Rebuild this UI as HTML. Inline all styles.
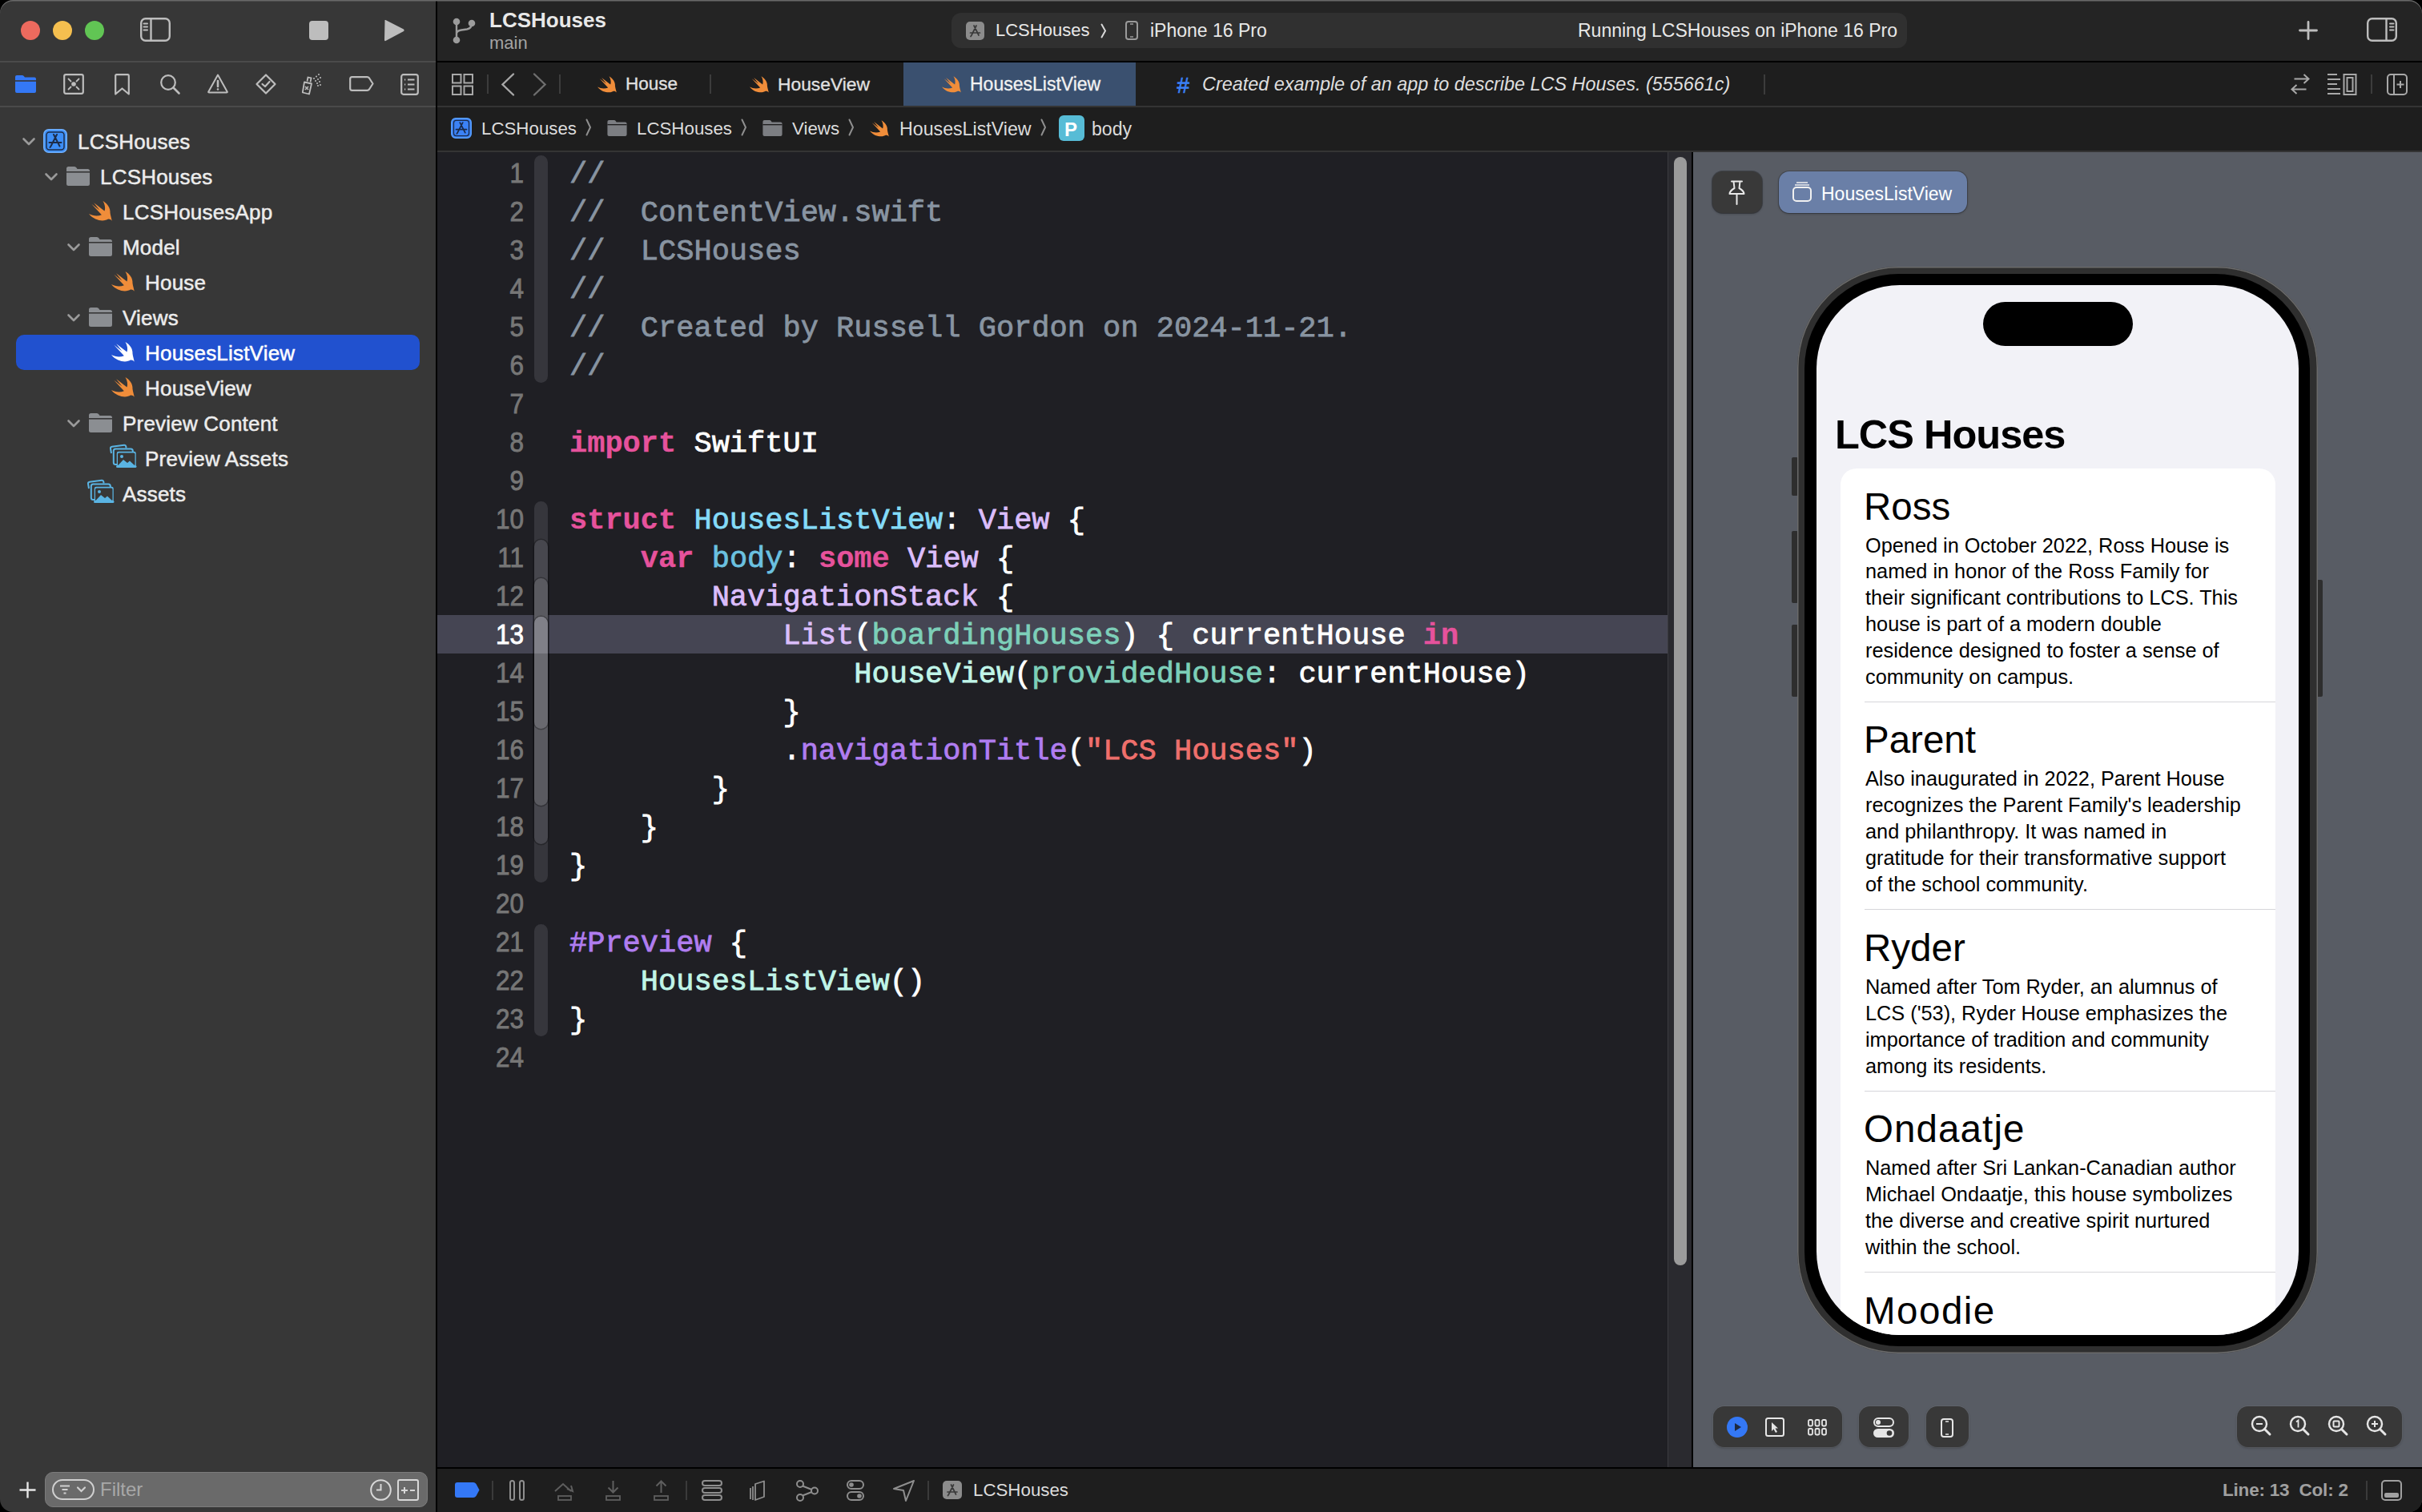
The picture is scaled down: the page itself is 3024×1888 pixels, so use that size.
<!DOCTYPE html><html><head><meta charset="utf-8"><style>
*{margin:0;padding:0;box-sizing:border-box}
html,body{width:3024px;height:1888px;overflow:hidden;background:#000}
body{position:relative;font-family:'Liberation Sans', sans-serif}
.a{position:absolute}
.t{position:absolute;white-space:pre;line-height:0;height:0}
.t span{display:inline-block;line-height:0}
svg{position:absolute;overflow:visible}
</style></head><body>
<div class="a" id="win" style="left:0;top:0;width:3024px;height:1888px;border-radius:16px;overflow:hidden;background:#373737">
<div class="a" style="left:26px;top:26px;width:24px;height:24px;border-radius:12px;background:#ed6a5e"></div>
<div class="a" style="left:66px;top:26px;width:24px;height:24px;border-radius:12px;background:#f5bf4f"></div>
<div class="a" style="left:106px;top:26px;width:24px;height:24px;border-radius:12px;background:#61c554"></div>
<svg style="left:175px;top:22px" width="38" height="30" viewBox="0 0 38 30"><rect x="1.2" y="1.2" width="35.6" height="27.6" rx="5.5" fill="none" stroke="#bdbdbd" stroke-width="2.4"/><path d="M13.5 1.5 V28.5" stroke="#bdbdbd" stroke-width="2.4"/><path d="M4.5 7.5 H9 M4.5 11.5 H9 M4.5 15.5 H9" stroke="#bdbdbd" stroke-width="2" stroke-linecap="round"/></svg>
<div class="a" style="left:386px;top:26px;width:24px;height:24px;border-radius:4px;background:#bdbdbd"></div>
<svg style="left:478px;top:24px" width="28" height="28" viewBox="0 0 28 28"><path d="M2.5 2 Q2 0.5 3.5 1 L26 12.5 Q27.5 14 26 15 L3.5 27 Q2 27.5 2 26 Z" fill="#bdbdbd"/></svg>
<div class="a" style="left:0;top:76px;width:544px;height:2px;background:#4a4a4a"></div>
<div class="a" style="left:0;top:132px;width:544px;height:2px;background:#4a4a4a"></div>
<svg style="left:19px;top:94px" width="26" height="22" viewBox="0 0 26 22"><path d="M2 0 H8.5 Q10 0 11 1.2 L12 2.5 H24 Q26 2.5 26 4.5 V20 Q26 22 24 22 H2 Q0 22 0 20 V2 Q0 0 2 0Z" fill="#3478f6"/><rect x="0" y="6.2" width="26" height="1.6" fill="#373737"/></svg>
<svg style="left:79px;top:92px" width="26" height="26" viewBox="0 0 26 26"><rect x="1.2" y="1.2" width="23.6" height="23.6" rx="2" fill="none" stroke="#bdbdbd" stroke-width="2.2"/><circle cx="13" cy="13" r="2.8" fill="#bdbdbd"/><path d="M6.5 6.5 L9.5 9.5 M19.5 6.5 L16.5 9.5 M6.5 19.5 L9.5 16.5 M19.5 19.5 L16.5 16.5" stroke="#bdbdbd" stroke-width="1.8" stroke-linecap="round"/></svg>
<svg style="left:143px;top:92px" width="19" height="27" viewBox="0 0 19 27"><path d="M1.2 2.5 Q1.2 1.2 2.5 1.2 H16.5 Q17.8 1.2 17.8 2.5 V25.5 L9.5 18.5 L1.2 25.5Z" fill="none" stroke="#bdbdbd" stroke-width="2.2" stroke-linejoin="round"/></svg>
<svg style="left:199px;top:92px" width="27" height="27" viewBox="0 0 27 27"><circle cx="11" cy="11" r="8.8" fill="none" stroke="#bdbdbd" stroke-width="2.2"/><path d="M17.5 17.5 L24.5 24.5" stroke="#bdbdbd" stroke-width="2.6" stroke-linecap="round"/></svg>
<svg style="left:259px;top:92px" width="26" height="25" viewBox="0 0 26 25"><path d="M13 1.5 L24.8 22.8 Q25 23.5 24 23.5 H2 Q1 23.5 1.2 22.8Z" fill="none" stroke="#bdbdbd" stroke-width="2" stroke-linejoin="round"/><path d="M13 9 V16" stroke="#bdbdbd" stroke-width="2.6" stroke-linecap="round"/><circle cx="13" cy="19.5" r="1.3" fill="#bdbdbd"/></svg>
<svg style="left:319px;top:92px" width="26" height="26" viewBox="0 0 26 26"><path d="M13 1.5 L24.5 13 L13 24.5 L1.5 13Z" fill="none" stroke="#bdbdbd" stroke-width="2.2" stroke-linejoin="round"/><path d="M8.5 13 L12 16 L17.5 10" fill="none" stroke="#bdbdbd" stroke-width="2.2" stroke-linecap="round" stroke-linejoin="round"/></svg>
<svg style="left:377px;top:92px" width="30" height="27" viewBox="0 0 30 27"><path d="M3 10.5 L12 12.5 L9 25.5 L0.8 23.5Z" fill="none" stroke="#bdbdbd" stroke-width="1.8" stroke-linejoin="round" transform="rotate(0)"/><path d="M6.5 9.5 L7.5 4.5 L11.5 5.5 L10.5 10.5" fill="none" stroke="#bdbdbd" stroke-width="1.8"/><path d="M4 16 L8 20 M8 16 L4 20" stroke="#bdbdbd" stroke-width="1.6"/><g fill="#bdbdbd"><circle cx="15" cy="6" r="1"/><circle cx="18" cy="3.5" r="1"/><circle cx="21" cy="1" r="1"/><circle cx="17" cy="9" r="1"/><circle cx="20" cy="7" r="1"/><circle cx="23" cy="5" r="1"/><circle cx="19" cy="12" r="1"/><circle cx="22" cy="10" r="1"/><circle cx="20" cy="15" r="1"/><circle cx="23" cy="14" r="1"/></g></svg>
<svg style="left:436px;top:95px" width="31" height="19" viewBox="0 0 31 19"><path d="M3.5 1.2 H22.5 Q24 1.2 25 2.5 L29.5 9.5 L25 16.5 Q24 17.8 22.5 17.8 H3.5 Q1.2 17.8 1.2 15.5 V3.5 Q1.2 1.2 3.5 1.2Z" fill="none" stroke="#bdbdbd" stroke-width="2.2" stroke-linejoin="round"/></svg>
<svg style="left:500px;top:92px" width="23" height="27" viewBox="0 0 23 27"><rect x="1.2" y="1.2" width="20.6" height="24.6" rx="2.5" fill="none" stroke="#bdbdbd" stroke-width="2.2"/><path d="M5 7.5 H6.2 M9 7.5 H17.5 M5 13.5 H6.2 M9 13.5 H17.5 M5 19.5 H6.2 M9 19.5 H17.5" stroke="#bdbdbd" stroke-width="2"/></svg>
<div class="a" style="left:20px;top:418px;width:504px;height:44px;border-radius:10px;background:#2151cf"></div>
<svg style="left:28px;top:172px" width="16" height="10" viewBox="0 0 16 10"><path d="M1.5 1.5 L8 8 L14.5 1.5" fill="none" stroke="#9a9a9a" stroke-width="2.6" stroke-linecap="round" stroke-linejoin="round"/></svg>
<svg style="left:54px;top:161px" width="30" height="30" viewBox="0 0 30 30"><rect x="0.8" y="0.8" width="28.4" height="28.4" rx="6" fill="#3d8ef6" stroke="#6fb0ff" stroke-width="1.6"/><rect x="4" y="4" width="22" height="22" rx="3.5" fill="none" stroke="#1d2c48" stroke-width="1.5"/><path d="M13 7 L20.5 21.5 M17 7 L9.5 21.5 M7.5 17 H22.5 M9.5 21.5 l-1 1.5" stroke="#1d2c48" stroke-width="2" fill="none" stroke-linecap="round"/></svg>
<div class="t" style="left:97px;top:176.9px;font-size:26px;color:#ececec;font-weight:normal;font-style:normal;font-family:'Liberation Sans', sans-serif;-webkit-text-stroke:0.5px #ececec;letter-spacing:0.2px"><span>LCSHouses</span></div>
<svg style="left:56px;top:216px" width="16" height="10" viewBox="0 0 16 10"><path d="M1.5 1.5 L8 8 L14.5 1.5" fill="none" stroke="#9a9a9a" stroke-width="2.6" stroke-linecap="round" stroke-linejoin="round"/></svg>
<svg style="left:83px;top:208px" width="29" height="24" viewBox="0 0 29 24"><path d="M2.5 0 H10 Q11.5 0 12.5 1.5 L13.5 3 H26.5 Q29 3 29 5.5 V21.5 Q29 24 26.5 24 H2.5 Q0 24 0 21.5 V2.5 Q0 0 2.5 0Z" fill="#8b8e92"/><rect x="0" y="6" width="29" height="1.6" fill="#373737"/></svg>
<div class="t" style="left:125px;top:220.9px;font-size:26px;color:#ececec;font-weight:normal;font-style:normal;font-family:'Liberation Sans', sans-serif;-webkit-text-stroke:0.5px #ececec;letter-spacing:0.2px"><span>LCSHouses</span></div>
<svg style="left:111px;top:251px" width="29" height="25" viewBox="0 0 29 25"><path d="M17.5 0 C22.5 3 27 8 26.5 14.5 C26.8 17.5 28.2 21.5 28.7 24.7 C27.5 23 25.5 22.3 24 22.6 C20 25.5 8 26 0 16.1 C5 18.6 11 19.2 15.9 17.2 L3.3 3.8 L13.4 11.4 L6.2 2.2 L19.5 12.5 C20.8 9 20 4 17.5 0 Z" fill="#f08d3a"/></svg>
<div class="t" style="left:153px;top:264.9px;font-size:26px;color:#ececec;font-weight:normal;font-style:normal;font-family:'Liberation Sans', sans-serif;-webkit-text-stroke:0.5px #ececec;letter-spacing:0.2px"><span>LCSHousesApp</span></div>
<svg style="left:84px;top:304px" width="16" height="10" viewBox="0 0 16 10"><path d="M1.5 1.5 L8 8 L14.5 1.5" fill="none" stroke="#9a9a9a" stroke-width="2.6" stroke-linecap="round" stroke-linejoin="round"/></svg>
<svg style="left:111px;top:296px" width="29" height="24" viewBox="0 0 29 24"><path d="M2.5 0 H10 Q11.5 0 12.5 1.5 L13.5 3 H26.5 Q29 3 29 5.5 V21.5 Q29 24 26.5 24 H2.5 Q0 24 0 21.5 V2.5 Q0 0 2.5 0Z" fill="#8b8e92"/><rect x="0" y="6" width="29" height="1.6" fill="#373737"/></svg>
<div class="t" style="left:153px;top:308.9px;font-size:26px;color:#ececec;font-weight:normal;font-style:normal;font-family:'Liberation Sans', sans-serif;-webkit-text-stroke:0.5px #ececec;letter-spacing:0.2px"><span>Model</span></div>
<svg style="left:139px;top:339px" width="29" height="25" viewBox="0 0 29 25"><path d="M17.5 0 C22.5 3 27 8 26.5 14.5 C26.8 17.5 28.2 21.5 28.7 24.7 C27.5 23 25.5 22.3 24 22.6 C20 25.5 8 26 0 16.1 C5 18.6 11 19.2 15.9 17.2 L3.3 3.8 L13.4 11.4 L6.2 2.2 L19.5 12.5 C20.8 9 20 4 17.5 0 Z" fill="#f08d3a"/></svg>
<div class="t" style="left:181px;top:352.9px;font-size:26px;color:#ececec;font-weight:normal;font-style:normal;font-family:'Liberation Sans', sans-serif;-webkit-text-stroke:0.5px #ececec;letter-spacing:0.2px"><span>House</span></div>
<svg style="left:84px;top:392px" width="16" height="10" viewBox="0 0 16 10"><path d="M1.5 1.5 L8 8 L14.5 1.5" fill="none" stroke="#9a9a9a" stroke-width="2.6" stroke-linecap="round" stroke-linejoin="round"/></svg>
<svg style="left:111px;top:384px" width="29" height="24" viewBox="0 0 29 24"><path d="M2.5 0 H10 Q11.5 0 12.5 1.5 L13.5 3 H26.5 Q29 3 29 5.5 V21.5 Q29 24 26.5 24 H2.5 Q0 24 0 21.5 V2.5 Q0 0 2.5 0Z" fill="#8b8e92"/><rect x="0" y="6" width="29" height="1.6" fill="#373737"/></svg>
<div class="t" style="left:153px;top:396.9px;font-size:26px;color:#ececec;font-weight:normal;font-style:normal;font-family:'Liberation Sans', sans-serif;-webkit-text-stroke:0.5px #ececec;letter-spacing:0.2px"><span>Views</span></div>
<svg style="left:139px;top:427px" width="29" height="25" viewBox="0 0 29 25"><path d="M17.5 0 C22.5 3 27 8 26.5 14.5 C26.8 17.5 28.2 21.5 28.7 24.7 C27.5 23 25.5 22.3 24 22.6 C20 25.5 8 26 0 16.1 C5 18.6 11 19.2 15.9 17.2 L3.3 3.8 L13.4 11.4 L6.2 2.2 L19.5 12.5 C20.8 9 20 4 17.5 0 Z" fill="#ffffff"/></svg>
<div class="t" style="left:181px;top:440.9px;font-size:26px;color:#ffffff;font-weight:normal;font-style:normal;font-family:'Liberation Sans', sans-serif;-webkit-text-stroke:0.5px #ffffff;letter-spacing:0.2px"><span>HousesListView</span></div>
<svg style="left:139px;top:471px" width="29" height="25" viewBox="0 0 29 25"><path d="M17.5 0 C22.5 3 27 8 26.5 14.5 C26.8 17.5 28.2 21.5 28.7 24.7 C27.5 23 25.5 22.3 24 22.6 C20 25.5 8 26 0 16.1 C5 18.6 11 19.2 15.9 17.2 L3.3 3.8 L13.4 11.4 L6.2 2.2 L19.5 12.5 C20.8 9 20 4 17.5 0 Z" fill="#f08d3a"/></svg>
<div class="t" style="left:181px;top:484.9px;font-size:26px;color:#ececec;font-weight:normal;font-style:normal;font-family:'Liberation Sans', sans-serif;-webkit-text-stroke:0.5px #ececec;letter-spacing:0.2px"><span>HouseView</span></div>
<svg style="left:84px;top:524px" width="16" height="10" viewBox="0 0 16 10"><path d="M1.5 1.5 L8 8 L14.5 1.5" fill="none" stroke="#9a9a9a" stroke-width="2.6" stroke-linecap="round" stroke-linejoin="round"/></svg>
<svg style="left:111px;top:516px" width="29" height="24" viewBox="0 0 29 24"><path d="M2.5 0 H10 Q11.5 0 12.5 1.5 L13.5 3 H26.5 Q29 3 29 5.5 V21.5 Q29 24 26.5 24 H2.5 Q0 24 0 21.5 V2.5 Q0 0 2.5 0Z" fill="#8b8e92"/><rect x="0" y="6" width="29" height="1.6" fill="#373737"/></svg>
<div class="t" style="left:153px;top:528.9px;font-size:26px;color:#ececec;font-weight:normal;font-style:normal;font-family:'Liberation Sans', sans-serif;-webkit-text-stroke:0.5px #ececec;letter-spacing:0.2px"><span>Preview Content</span></div>
<svg style="left:137px;top:557px" width="34" height="28" viewBox="0 0 34 28"><path d="M2 9 L1 3 Q0.8 1 2.8 0.7 L18 -1.3 Q20 -1.5 20.3 0.5 L20.6 2.5" fill="none" stroke="#5ab4e3" stroke-width="2"/><rect x="8" y="6" width="25.5" height="21" rx="3" fill="#5ab4e3" stroke="#373737" stroke-width="1.5"/><rect x="4.8" y="3.5" width="24" height="19.5" rx="2.5" fill="none" stroke="#5ab4e3" stroke-width="2"/><rect x="10" y="8.5" width="21.5" height="16" rx="1.5" fill="#373737"/><path d="M10 24.5 L17 17 L22 21 L25 18.5 L31.5 24.5Z" fill="#5ab4e3"/><circle cx="15" cy="13" r="2" fill="#5ab4e3"/><rect x="8" y="24" width="25.5" height="3" rx="1.5" fill="#5ab4e3"/></svg>
<div class="t" style="left:181px;top:572.9px;font-size:26px;color:#ececec;font-weight:normal;font-style:normal;font-family:'Liberation Sans', sans-serif;-webkit-text-stroke:0.5px #ececec;letter-spacing:0.2px"><span>Preview Assets</span></div>
<svg style="left:109px;top:601px" width="34" height="28" viewBox="0 0 34 28"><path d="M2 9 L1 3 Q0.8 1 2.8 0.7 L18 -1.3 Q20 -1.5 20.3 0.5 L20.6 2.5" fill="none" stroke="#5ab4e3" stroke-width="2"/><rect x="8" y="6" width="25.5" height="21" rx="3" fill="#5ab4e3" stroke="#373737" stroke-width="1.5"/><rect x="4.8" y="3.5" width="24" height="19.5" rx="2.5" fill="none" stroke="#5ab4e3" stroke-width="2"/><rect x="10" y="8.5" width="21.5" height="16" rx="1.5" fill="#373737"/><path d="M10 24.5 L17 17 L22 21 L25 18.5 L31.5 24.5Z" fill="#5ab4e3"/><circle cx="15" cy="13" r="2" fill="#5ab4e3"/><rect x="8" y="24" width="25.5" height="3" rx="1.5" fill="#5ab4e3"/></svg>
<div class="t" style="left:153px;top:616.9px;font-size:26px;color:#ececec;font-weight:normal;font-style:normal;font-family:'Liberation Sans', sans-serif;-webkit-text-stroke:0.5px #ececec;letter-spacing:0.2px"><span>Assets</span></div>
<div class="a" style="left:56px;top:1838px;width:478px;height:44px;border-radius:10px;background:#6a6a6a;border:1px solid #7b7b7b"></div>
<svg style="left:23px;top:1849px" width="23" height="23" viewBox="0 0 23 23"><path d="M11.5 1.5 V21.5 M1.5 11.5 H21.5" stroke="#e6e6e6" stroke-width="2.4"/></svg>
<svg style="left:65px;top:1847px" width="53" height="26" viewBox="0 0 53 26"><rect x="1" y="1" width="51" height="24" rx="12" fill="none" stroke="#d0d0d0" stroke-width="2"/><path d="M10 8.5 H22 M12.5 13 H19.5 M14.5 17.5 H17.5" stroke="#d0d0d0" stroke-width="2"/><path d="M32 10.5 L36.5 15 L41 10.5" fill="none" stroke="#d0d0d0" stroke-width="2.2" stroke-linecap="round"/></svg>
<div class="t" style="left:125px;top:1859.6px;font-size:24px;color:#a8a8a8;font-weight:normal;font-style:normal;font-family:'Liberation Sans', sans-serif;"><span>Filter</span></div>
<svg style="left:462px;top:1847px" width="27" height="27" viewBox="0 0 27 27"><circle cx="13.5" cy="13.5" r="12.3" fill="none" stroke="#d8d8d8" stroke-width="2"/><path d="M13.5 6 V13.5 H8" fill="none" stroke="#d8d8d8" stroke-width="2"/></svg>
<svg style="left:496px;top:1847px" width="27" height="27" viewBox="0 0 27 27"><rect x="1" y="1" width="25" height="25" rx="2" fill="none" stroke="#d8d8d8" stroke-width="2"/><path d="M5 14 H13 M9 10 V18 M16 14 H22" stroke="#d8d8d8" stroke-width="2"/></svg>
<div class="a" style="left:544px;top:0;width:2px;height:1888px;background:#000"></div>
<div class="a" style="left:546px;top:0;width:2478px;height:76px;background:#242424"></div>
<div class="a" style="left:546px;top:76px;width:2478px;height:2px;background:#000"></div>
<div class="a" style="left:546px;top:78px;width:2478px;height:54px;background:#1e1e1e"></div>
<div class="a" style="left:546px;top:132px;width:2478px;height:2px;background:#343434"></div>
<div class="a" style="left:546px;top:134px;width:2478px;height:54px;background:#1e1e1e"></div>
<div class="a" style="left:546px;top:188px;width:2478px;height:2px;background:#343434"></div>
<svg style="left:564px;top:22px" width="30" height="33" viewBox="0 0 30 33"><circle cx="6" cy="5" r="4.3" fill="#9c9c9c"/><circle cx="6" cy="28" r="4.3" fill="#9c9c9c"/><circle cx="25" cy="7" r="4.3" fill="#9c9c9c"/><path d="M6 5 V28 M25 7 Q25 13.5 19 14.5 L12 15.5 Q6 16.5 6 20" fill="none" stroke="#9c9c9c" stroke-width="2.4"/></svg>
<div class="t" style="left:611px;top:24.9px;font-size:26px;color:#e8e8e8;font-weight:bold;font-style:normal;font-family:'Liberation Sans', sans-serif;"><span>LCSHouses</span></div>
<div class="t" style="left:611px;top:54.3px;font-size:22px;color:#a3a3a3;font-weight:normal;font-style:normal;font-family:'Liberation Sans', sans-serif;"><span>main</span></div>
<div class="a" style="left:1188px;top:16px;width:1193px;height:44px;border-radius:12px;background:#303030"></div>
<svg style="left:1206px;top:27px" width="23" height="23" viewBox="0 0 23 23"><rect x="0" y="0" width="23" height="23" rx="5" fill="#8c8c8c"/><path d="M10 5 L16 17 M13 5 L7 17 M5.5 14 H17.5 M7 17 l-1 1.5" stroke="#3a3a3a" stroke-width="1.7" fill="none" stroke-linecap="round"/></svg>
<div class="t" style="left:1243px;top:38.3px;font-size:22px;color:#e8e8e8;font-weight:normal;font-style:normal;font-family:'Liberation Sans', sans-serif;"><span>LCSHouses</span></div>
<svg style="left:1374px;top:29px" width="8" height="19" viewBox="0 0 8 19"><path d="M1.5 1.5 L6 9.5 L1.5 17.5" fill="none" stroke="#d8d8d8" stroke-width="2" stroke-linecap="round"/></svg>
<svg style="left:1405px;top:26px" width="16" height="24" viewBox="0 0 16 24"><rect x="1" y="1" width="14" height="22" rx="3" fill="none" stroke="#9a9a9a" stroke-width="2"/><path d="M6 4 H10 M6 20 H10" stroke="#9a9a9a" stroke-width="1.3"/></svg>
<div class="t" style="left:1436px;top:37.95px;font-size:23px;color:#e8e8e8;font-weight:normal;font-style:normal;font-family:'Liberation Sans', sans-serif;"><span>iPhone 16 Pro</span></div>
<div class="t" style="left:1970px;top:37.95px;font-size:23px;color:#e8e8e8;font-weight:normal;font-style:normal;font-family:'Liberation Sans', sans-serif;"><span>Running LCSHouses on iPhone 16 Pro</span></div>
<svg style="left:2870px;top:26px" width="24" height="24" viewBox="0 0 24 24"><path d="M12 1.5 V22.5 M1.5 12 H22.5" stroke="#bdbdbd" stroke-width="2.8" stroke-linecap="round"/></svg>
<svg style="left:2955px;top:22px" width="38" height="30" viewBox="0 0 38 30"><rect x="1.2" y="1.2" width="35.6" height="27.6" rx="5.5" fill="none" stroke="#bdbdbd" stroke-width="2.4"/><path d="M24.5 1.5 V28.5" stroke="#bdbdbd" stroke-width="2.4"/><path d="M29 7.5 H33.5 M29 11.5 H33.5 M29 15.5 H33.5" stroke="#bdbdbd" stroke-width="2" stroke-linecap="round"/></svg>
<svg style="left:564px;top:92px" width="27" height="27" viewBox="0 0 27 27"><g fill="none" stroke="#a8a8a8" stroke-width="2"><rect x="1" y="1" width="10.5" height="10.5"/><rect x="15.5" y="1" width="10.5" height="10.5"/><rect x="1" y="15.5" width="10.5" height="10.5"/><rect x="15.5" y="15.5" width="10.5" height="10.5"/></g></svg>
<div class="a" style="left:608px;top:93px;width:2px;height:24px;background:#3c3c3c"></div>
<svg style="left:625px;top:91px" width="18" height="29" viewBox="0 0 18 29"><path d="M16 1.5 L2.5 14.5 L16 27.5" fill="none" stroke="#a8a8a8" stroke-width="2.4" stroke-linecap="round"/></svg>
<svg style="left:665px;top:91px" width="18" height="29" viewBox="0 0 18 29"><path d="M2 1.5 L15.5 14.5 L2 27.5" fill="none" stroke="#6e6e6e" stroke-width="2.4" stroke-linecap="round"/></svg>
<div class="a" style="left:698px;top:93px;width:2px;height:24px;background:#3c3c3c"></div>
<svg style="left:746px;top:95px" width="24" height="21" viewBox="0 0 29 25"><path d="M17.5 0 C22.5 3 27 8 26.5 14.5 C26.8 17.5 28.2 21.5 28.7 24.7 C27.5 23 25.5 22.3 24 22.6 C20 25.5 8 26 0 16.1 C5 18.6 11 19.2 15.9 17.2 L3.3 3.8 L13.4 11.4 L6.2 2.2 L19.5 12.5 C20.8 9 20 4 17.5 0 Z" fill="#f08d3a"/></svg>
<div class="t" style="left:781px;top:105.12px;font-size:22.5px;color:#e0e0e0;font-weight:normal;font-style:normal;font-family:'Liberation Sans', sans-serif;-webkit-text-stroke:0.3px #e0e0e0"><span>House</span></div>
<div class="a" style="left:886px;top:93px;width:2px;height:24px;background:#3c3c3c"></div>
<svg style="left:936px;top:95px" width="24" height="21" viewBox="0 0 29 25"><path d="M17.5 0 C22.5 3 27 8 26.5 14.5 C26.8 17.5 28.2 21.5 28.7 24.7 C27.5 23 25.5 22.3 24 22.6 C20 25.5 8 26 0 16.1 C5 18.6 11 19.2 15.9 17.2 L3.3 3.8 L13.4 11.4 L6.2 2.2 L19.5 12.5 C20.8 9 20 4 17.5 0 Z" fill="#f08d3a"/></svg>
<div class="t" style="left:971px;top:105.02px;font-size:22.8px;color:#e0e0e0;font-weight:normal;font-style:normal;font-family:'Liberation Sans', sans-serif;-webkit-text-stroke:0.3px #e0e0e0"><span>HouseView</span></div>
<div class="a" style="left:1128px;top:78px;width:290px;height:54px;background:#3a506f"></div>
<svg style="left:1176px;top:95px" width="24" height="21" viewBox="0 0 29 25"><path d="M17.5 0 C22.5 3 27 8 26.5 14.5 C26.8 17.5 28.2 21.5 28.7 24.7 C27.5 23 25.5 22.3 24 22.6 C20 25.5 8 26 0 16.1 C5 18.6 11 19.2 15.9 17.2 L3.3 3.8 L13.4 11.4 L6.2 2.2 L19.5 12.5 C20.8 9 20 4 17.5 0 Z" fill="#f08d3a"/></svg>
<div class="t" style="left:1211px;top:104.95px;font-size:23px;color:#f2f2f2;font-weight:normal;font-style:normal;font-family:'Liberation Sans', sans-serif;-webkit-text-stroke:0.3px #f2f2f2"><span>HousesListView</span></div>
<div class="t" style="left:1469px;top:106.7px;font-size:28px;color:#3b82f6;font-weight:normal;font-style:italic;font-family:'Liberation Sans', sans-serif;-webkit-text-stroke:0.6px #3b82f6"><span>#</span></div>
<div class="t" style="left:1501px;top:104.81px;font-size:23.4px;color:#dedede;font-weight:normal;font-style:italic;font-family:'Liberation Sans', sans-serif;"><span>Created example of an app to describe LCS Houses. (555661c)</span></div>
<div class="a" style="left:2202px;top:93px;width:2px;height:25px;background:#3c3c3c"></div>
<svg style="left:2859px;top:92px" width="26" height="27" viewBox="0 0 26 27"><path d="M5.5 6.5 H23.5 M17.5 1 L23.5 6.5 L17.5 12 M20.5 19.5 H2.5 M8.5 14 L2.5 19.5 L8.5 25" fill="none" stroke="#a8a8a8" stroke-width="2"/></svg>
<svg style="left:2906px;top:92px" width="37" height="27" viewBox="0 0 37 27"><path d="M0 1 H12 M0 7 H16 M0 13 H12 M0 19 H16 M0 25 H16" stroke="#a8a8a8" stroke-width="2"/><rect x="20.5" y="1" width="15" height="25" fill="none" stroke="#a8a8a8" stroke-width="2"/><rect x="24.5" y="5" width="7" height="17" fill="none" stroke="#a8a8a8" stroke-width="2"/></svg>
<div class="a" style="left:2960px;top:93px;width:2px;height:24px;background:#3c3c3c"></div>
<svg style="left:2980px;top:92px" width="26" height="27" viewBox="0 0 26 27"><rect x="1" y="1" width="24" height="25" rx="4" fill="none" stroke="#a8a8a8" stroke-width="2"/><path d="M9 1 V26 M12.5 13.5 H21.5 M17 9 V18" stroke="#a8a8a8" stroke-width="2"/></svg>
<svg style="left:563px;top:147px" width="26" height="26" viewBox="0 0 30 30"><rect x="0.8" y="0.8" width="28.4" height="28.4" rx="6" fill="#3b82f6" stroke="#5aa0ff" stroke-width="1.6"/><rect x="4" y="4" width="22" height="22" rx="3.5" fill="none" stroke="#1a2a48" stroke-width="1.5"/><path d="M13 7 L20.5 21.5 M17 7 L9.5 21.5 M7.5 17 H22.5 M9.5 21.5 l-1 1.5" stroke="#1a2a48" stroke-width="2" fill="none" stroke-linecap="round"/></svg>
<div class="t" style="left:601px;top:161.19px;font-size:22.3px;color:#dcdcdc;font-weight:normal;font-style:normal;font-family:'Liberation Sans', sans-serif;"><span>LCSHouses</span></div>
<svg style="left:731px;top:148px" width="8" height="22" viewBox="0 0 8 22"><path d="M1.5 1.5 L6 11 L1.5 20.5" fill="none" stroke="#8f8f8f" stroke-width="2" stroke-linecap="round"/></svg>
<svg style="left:758px;top:150px" width="25" height="20" viewBox="0 0 29 24"><path d="M2.5 0 H10 Q11.5 0 12.5 1.5 L13.5 3 H26.5 Q29 3 29 5.5 V21.5 Q29 24 26.5 24 H2.5 Q0 24 0 21.5 V2.5 Q0 0 2.5 0Z" fill="#7c7e82"/><rect x="0" y="6" width="29" height="1.6" fill="#1e1e1e"/></svg>
<div class="t" style="left:795px;top:161.19px;font-size:22.3px;color:#dcdcdc;font-weight:normal;font-style:normal;font-family:'Liberation Sans', sans-serif;"><span>LCSHouses</span></div>
<svg style="left:925px;top:148px" width="8" height="22" viewBox="0 0 8 22"><path d="M1.5 1.5 L6 11 L1.5 20.5" fill="none" stroke="#8f8f8f" stroke-width="2" stroke-linecap="round"/></svg>
<svg style="left:952px;top:150px" width="25" height="20" viewBox="0 0 29 24"><path d="M2.5 0 H10 Q11.5 0 12.5 1.5 L13.5 3 H26.5 Q29 3 29 5.5 V21.5 Q29 24 26.5 24 H2.5 Q0 24 0 21.5 V2.5 Q0 0 2.5 0Z" fill="#7c7e82"/><rect x="0" y="6" width="29" height="1.6" fill="#1e1e1e"/></svg>
<div class="t" style="left:989px;top:161.19px;font-size:22.3px;color:#dcdcdc;font-weight:normal;font-style:normal;font-family:'Liberation Sans', sans-serif;"><span>Views</span></div>
<svg style="left:1059px;top:148px" width="8" height="22" viewBox="0 0 8 22"><path d="M1.5 1.5 L6 11 L1.5 20.5" fill="none" stroke="#8f8f8f" stroke-width="2" stroke-linecap="round"/></svg>
<svg style="left:1086px;top:150px" width="24" height="21" viewBox="0 0 29 25"><path d="M17.5 0 C22.5 3 27 8 26.5 14.5 C26.8 17.5 28.2 21.5 28.7 24.7 C27.5 23 25.5 22.3 24 22.6 C20 25.5 8 26 0 16.1 C5 18.6 11 19.2 15.9 17.2 L3.3 3.8 L13.4 11.4 L6.2 2.2 L19.5 12.5 C20.8 9 20 4 17.5 0 Z" fill="#f08d3a"/></svg>
<div class="t" style="left:1123px;top:160.88px;font-size:23.2px;color:#dcdcdc;font-weight:normal;font-style:normal;font-family:'Liberation Sans', sans-serif;"><span>HousesListView</span></div>
<svg style="left:1299px;top:148px" width="8" height="22" viewBox="0 0 8 22"><path d="M1.5 1.5 L6 11 L1.5 20.5" fill="none" stroke="#8f8f8f" stroke-width="2" stroke-linecap="round"/></svg>
<div class="a" style="left:1322px;top:144px;width:32px;height:32px;border-radius:6px;background:#57bcd6"></div>
<div class="t" style="left:1329px;top:161.6px;font-size:24px;color:#ffffff;font-weight:bold;font-style:normal;font-family:'Liberation Sans', sans-serif;"><span>P</span></div>
<div class="t" style="left:1363px;top:160.91px;font-size:23.1px;color:#dcdcdc;font-weight:normal;font-style:normal;font-family:'Liberation Sans', sans-serif;"><span>body</span></div>
<div class="a" style="left:546px;top:1832px;width:2478px;height:2px;background:#000"></div>
<div class="a" style="left:546px;top:1834px;width:2478px;height:54px;background:#1e1e1e"></div>
<svg style="left:568px;top:1851px" width="31" height="19" viewBox="0 0 31 19"><path d="M3 0 H23 Q25 0 26.5 2 L30.5 9.5 L26.5 17 Q25 19 23 19 H3 Q0 19 0 16 V3 Q0 0 3 0Z" fill="#3478f6"/></svg>
<div class="a" style="left:614px;top:1849px;width:2px;height:24px;background:#3a3a3a"></div>
<svg style="left:636px;top:1848px" width="20" height="26" viewBox="0 0 20 26"><rect x="1" y="1" width="5" height="24" rx="2.5" fill="none" stroke="#8e8e8e" stroke-width="2"/><rect x="13" y="1" width="5" height="24" rx="2.5" fill="none" stroke="#8e8e8e" stroke-width="2"/></svg>
<svg style="left:692px;top:1848px" width="28" height="26" viewBox="0 0 28 26"><path d="M1 14 L11 5 L21 14 M16 11 L23 14 L21 7" fill="none" stroke="#5e5e5e" stroke-width="2"/><rect x="5" y="20" width="16" height="5" fill="none" stroke="#5e5e5e" stroke-width="1.8"/></svg>
<svg style="left:756px;top:1848px" width="19" height="26" viewBox="0 0 19 26"><path d="M9.5 1 V15 M3.5 9.5 L9.5 15.5 L15.5 9.5" fill="none" stroke="#5e5e5e" stroke-width="2"/><rect x="1" y="20" width="17" height="5" fill="none" stroke="#5e5e5e" stroke-width="1.8"/></svg>
<svg style="left:816px;top:1848px" width="19" height="26" viewBox="0 0 19 26"><path d="M9.5 16 V2 M3.5 7.5 L9.5 1.5 L15.5 7.5" fill="none" stroke="#5e5e5e" stroke-width="2"/><rect x="1" y="20" width="17" height="5" fill="none" stroke="#5e5e5e" stroke-width="1.8"/></svg>
<div class="a" style="left:856px;top:1849px;width:2px;height:24px;background:#3a3a3a"></div>
<svg style="left:876px;top:1848px" width="26" height="26" viewBox="0 0 26 26"><rect x="1" y="1" width="24" height="6" rx="3" fill="none" stroke="#8e8e8e" stroke-width="2"/><rect x="1" y="10" width="24" height="6" rx="3" fill="none" stroke="#8e8e8e" stroke-width="2"/><rect x="1" y="19" width="24" height="6" rx="3" fill="none" stroke="#8e8e8e" stroke-width="2"/></svg>
<svg style="left:936px;top:1848px" width="24" height="27" viewBox="0 0 24 27"><path d="M7 5 L18 1.5 V21 L7 25Z M4 8 V25 M1 10 V24" fill="none" stroke="#8e8e8e" stroke-width="1.8" stroke-linejoin="round"/></svg>
<svg style="left:994px;top:1848px" width="28" height="27" viewBox="0 0 28 27"><circle cx="5" cy="5" r="4" fill="none" stroke="#8e8e8e" stroke-width="2"/><circle cx="5" cy="22" r="4" fill="none" stroke="#8e8e8e" stroke-width="2"/><circle cx="23" cy="13.5" r="4" fill="none" stroke="#8e8e8e" stroke-width="2"/><path d="M8 7.5 L19.5 12 M8 19.5 L19.5 15" stroke="#8e8e8e" stroke-width="2"/></svg>
<svg style="left:1057px;top:1848px" width="22" height="26" viewBox="0 0 22 26"><rect x="1" y="1" width="20" height="10" rx="5" fill="none" stroke="#8e8e8e" stroke-width="2"/><circle cx="6" cy="6" r="2.8" fill="#8e8e8e"/><rect x="1" y="15" width="20" height="10" rx="5" fill="none" stroke="#8e8e8e" stroke-width="2"/><circle cx="16" cy="20" r="2.8" fill="#8e8e8e"/></svg>
<svg style="left:1115px;top:1848px" width="27" height="27" viewBox="0 0 27 27"><path d="M26 1 L1 11 L13 13 L16 26Z" fill="none" stroke="#8e8e8e" stroke-width="2" stroke-linejoin="round"/></svg>
<div class="a" style="left:1158px;top:1849px;width:2px;height:24px;background:#3a3a3a"></div>
<svg style="left:1177px;top:1849px" width="24" height="23" viewBox="0 0 24 23"><rect x="0" y="0" width="24" height="23" rx="5" fill="#8c8c8c"/><path d="M10.5 5 L16.5 17 M13.5 5 L7.5 17 M6 14 H18 M7.5 17 l-1 1.5" stroke="#3a3a3a" stroke-width="1.7" fill="none" stroke-linecap="round"/></svg>
<div class="t" style="left:1215px;top:1861.19px;font-size:22.3px;color:#dcdcdc;font-weight:normal;font-style:normal;font-family:'Liberation Sans', sans-serif;"><span>LCSHouses</span></div>
<div class="t" style="left:2775px;top:1861.12px;font-size:22.5px;color:#a0a0a0;font-weight:bold;font-style:normal;font-family:'Liberation Sans', sans-serif;letter-spacing:-0.2px"><span>Line: 13  Col: 2</span></div>
<div class="a" style="left:2954px;top:1849px;width:2px;height:24px;background:#3a3a3a"></div>
<svg style="left:2973px;top:1848px" width="26" height="26" viewBox="0 0 26 26"><rect x="1" y="1" width="24" height="24" rx="4" fill="none" stroke="#a0a0a0" stroke-width="2"/><rect x="4" y="16" width="18" height="6" rx="2" fill="#a0a0a0"/></svg>
<div class="a" style="left:546px;top:190px;width:1536px;height:1642px;background:#1f1f24"></div>
<div class="a" style="left:2082px;top:190px;width:30px;height:1642px;background:#2a2a2f;border-left:1px solid #3a3a3f"></div>
<div class="a" style="left:2090px;top:196px;width:16px;height:1384px;border-radius:8px;background:#9b9b9b"></div>
<div class="a" style="left:2112px;top:190px;width:2px;height:1642px;background:#000"></div>
<div class="a" style="left:546px;top:768px;width:1536px;height:48px;background:#454553"></div>
<div class="a" style="left:667px;top:194px;width:17px;height:284px;border-radius:8.5px;background:#36363c"></div>
<div class="a" style="left:667px;top:626px;width:17px;height:476px;border-radius:8.5px;background:#36363c"></div>
<div class="a" style="left:667px;top:674px;width:17px;height:380px;border-radius:8.5px;background:#47474e;box-shadow:0 0 0 1.5px rgba(0,0,0,0.28)"></div>
<div class="a" style="left:667px;top:722px;width:17px;height:284px;border-radius:8.5px;background:#5a5a60;box-shadow:0 0 0 1.5px rgba(0,0,0,0.28)"></div>
<div class="a" style="left:667px;top:770px;width:17px;height:140px;border-radius:8.5px;background:#69696f;box-shadow:0 0 0 1.5px rgba(0,0,0,0.28)"></div>
<div class="a" style="left:667px;top:770px;width:17px;height:46px;border-radius:8.5px 8.5px 0 0;background:#808088"></div>
<div class="a" style="left:667px;top:1154px;width:17px;height:140px;border-radius:8.5px;background:#36363c"></div>
<div class="t" style="left:560px;width:94px;text-align:right;top:215.75px;font-size:35px;color:#767676;-webkit-text-stroke:0.9px #767676;transform:scaleX(0.9);transform-origin:100% 0"><span>1</span></div>
<div class="t" style="left:711px;top:218.38px;font-family:'Liberation Mono', monospace;font-size:37px"><span style="color:#8894a1;font-weight:normal;-webkit-text-stroke:0.8px #8894a1">//</span></div>
<div class="t" style="left:560px;width:94px;text-align:right;top:263.75px;font-size:35px;color:#767676;-webkit-text-stroke:0.9px #767676;transform:scaleX(0.9);transform-origin:100% 0"><span>2</span></div>
<div class="t" style="left:711px;top:266.38px;font-family:'Liberation Mono', monospace;font-size:37px"><span style="color:#8894a1;font-weight:normal;-webkit-text-stroke:0.8px #8894a1">//  ContentView.swift</span></div>
<div class="t" style="left:560px;width:94px;text-align:right;top:311.75px;font-size:35px;color:#767676;-webkit-text-stroke:0.9px #767676;transform:scaleX(0.9);transform-origin:100% 0"><span>3</span></div>
<div class="t" style="left:711px;top:314.38px;font-family:'Liberation Mono', monospace;font-size:37px"><span style="color:#8894a1;font-weight:normal;-webkit-text-stroke:0.8px #8894a1">//  LCSHouses</span></div>
<div class="t" style="left:560px;width:94px;text-align:right;top:359.75px;font-size:35px;color:#767676;-webkit-text-stroke:0.9px #767676;transform:scaleX(0.9);transform-origin:100% 0"><span>4</span></div>
<div class="t" style="left:711px;top:362.38px;font-family:'Liberation Mono', monospace;font-size:37px"><span style="color:#8894a1;font-weight:normal;-webkit-text-stroke:0.8px #8894a1">//</span></div>
<div class="t" style="left:560px;width:94px;text-align:right;top:407.75px;font-size:35px;color:#767676;-webkit-text-stroke:0.9px #767676;transform:scaleX(0.9);transform-origin:100% 0"><span>5</span></div>
<div class="t" style="left:711px;top:410.38px;font-family:'Liberation Mono', monospace;font-size:37px"><span style="color:#8894a1;font-weight:normal;-webkit-text-stroke:0.8px #8894a1">//  Created by Russell Gordon on 2024-11-21.</span></div>
<div class="t" style="left:560px;width:94px;text-align:right;top:455.75px;font-size:35px;color:#767676;-webkit-text-stroke:0.9px #767676;transform:scaleX(0.9);transform-origin:100% 0"><span>6</span></div>
<div class="t" style="left:711px;top:458.38px;font-family:'Liberation Mono', monospace;font-size:37px"><span style="color:#8894a1;font-weight:normal;-webkit-text-stroke:0.8px #8894a1">//</span></div>
<div class="t" style="left:560px;width:94px;text-align:right;top:503.75px;font-size:35px;color:#767676;-webkit-text-stroke:0.9px #767676;transform:scaleX(0.9);transform-origin:100% 0"><span>7</span></div>
<div class="t" style="left:560px;width:94px;text-align:right;top:551.75px;font-size:35px;color:#767676;-webkit-text-stroke:0.9px #767676;transform:scaleX(0.9);transform-origin:100% 0"><span>8</span></div>
<div class="t" style="left:711px;top:554.38px;font-family:'Liberation Mono', monospace;font-size:37px"><span style="color:#e6529c;font-weight:bold;-webkit-text-stroke:0.3px #e6529c">import</span><span style="color:#ffffff;font-weight:normal;-webkit-text-stroke:0.8px #ffffff"> SwiftUI</span></div>
<div class="t" style="left:560px;width:94px;text-align:right;top:599.75px;font-size:35px;color:#767676;-webkit-text-stroke:0.9px #767676;transform:scaleX(0.9);transform-origin:100% 0"><span>9</span></div>
<div class="t" style="left:560px;width:94px;text-align:right;top:647.75px;font-size:35px;color:#767676;-webkit-text-stroke:0.9px #767676;transform:scaleX(0.9);transform-origin:100% 0"><span>10</span></div>
<div class="t" style="left:711px;top:650.38px;font-family:'Liberation Mono', monospace;font-size:37px"><span style="color:#e6529c;font-weight:bold;-webkit-text-stroke:0.3px #e6529c">struct</span><span style="color:#ffffff;font-weight:normal;-webkit-text-stroke:0.8px #ffffff"> </span><span style="color:#84dbf8;font-weight:normal;-webkit-text-stroke:0.8px #84dbf8">HousesListView</span><span style="color:#ffffff;font-weight:normal;-webkit-text-stroke:0.8px #ffffff">: </span><span style="color:#dbbdfb;font-weight:normal;-webkit-text-stroke:0.8px #dbbdfb">View</span><span style="color:#ffffff;font-weight:normal;-webkit-text-stroke:0.8px #ffffff"> {</span></div>
<div class="t" style="left:560px;width:94px;text-align:right;top:695.75px;font-size:35px;color:#767676;-webkit-text-stroke:0.9px #767676;transform:scaleX(0.9);transform-origin:100% 0"><span>11</span></div>
<div class="t" style="left:711px;top:698.38px;font-family:'Liberation Mono', monospace;font-size:37px"><span style="color:#ffffff;font-weight:normal;-webkit-text-stroke:0.8px #ffffff">    </span><span style="color:#e6529c;font-weight:bold;-webkit-text-stroke:0.3px #e6529c">var</span><span style="color:#ffffff;font-weight:normal;-webkit-text-stroke:0.8px #ffffff"> </span><span style="color:#6bc1e0;font-weight:normal;-webkit-text-stroke:0.8px #6bc1e0">body</span><span style="color:#ffffff;font-weight:normal;-webkit-text-stroke:0.8px #ffffff">: </span><span style="color:#e6529c;font-weight:bold;-webkit-text-stroke:0.3px #e6529c">some</span><span style="color:#ffffff;font-weight:normal;-webkit-text-stroke:0.8px #ffffff"> </span><span style="color:#dbbdfb;font-weight:normal;-webkit-text-stroke:0.8px #dbbdfb">View</span><span style="color:#ffffff;font-weight:normal;-webkit-text-stroke:0.8px #ffffff"> {</span></div>
<div class="t" style="left:560px;width:94px;text-align:right;top:743.75px;font-size:35px;color:#767676;-webkit-text-stroke:0.9px #767676;transform:scaleX(0.9);transform-origin:100% 0"><span>12</span></div>
<div class="t" style="left:711px;top:746.38px;font-family:'Liberation Mono', monospace;font-size:37px"><span style="color:#ffffff;font-weight:normal;-webkit-text-stroke:0.8px #ffffff">        </span><span style="color:#dbbdfb;font-weight:normal;-webkit-text-stroke:0.8px #dbbdfb">NavigationStack</span><span style="color:#ffffff;font-weight:normal;-webkit-text-stroke:0.8px #ffffff"> {</span></div>
<div class="t" style="left:560px;width:94px;text-align:right;top:791.75px;font-size:35px;color:#ffffff;-webkit-text-stroke:0.9px #ffffff;transform:scaleX(0.9);transform-origin:100% 0"><span>13</span></div>
<div class="t" style="left:711px;top:794.38px;font-family:'Liberation Mono', monospace;font-size:37px"><span style="color:#ffffff;font-weight:normal;-webkit-text-stroke:0.8px #ffffff">            </span><span style="color:#dbbdfb;font-weight:normal;-webkit-text-stroke:0.8px #dbbdfb">List</span><span style="color:#ffffff;font-weight:normal;-webkit-text-stroke:0.8px #ffffff">(</span><span style="color:#7dcfb9;font-weight:normal;-webkit-text-stroke:0.8px #7dcfb9">boardingHouses</span><span style="color:#ffffff;font-weight:normal;-webkit-text-stroke:0.8px #ffffff">) { currentHouse </span><span style="color:#e6529c;font-weight:bold;-webkit-text-stroke:0.3px #e6529c">in</span></div>
<div class="t" style="left:560px;width:94px;text-align:right;top:839.75px;font-size:35px;color:#767676;-webkit-text-stroke:0.9px #767676;transform:scaleX(0.9);transform-origin:100% 0"><span>14</span></div>
<div class="t" style="left:711px;top:842.38px;font-family:'Liberation Mono', monospace;font-size:37px"><span style="color:#ffffff;font-weight:normal;-webkit-text-stroke:0.8px #ffffff">                </span><span style="color:#c0f5e8;font-weight:normal;-webkit-text-stroke:0.8px #c0f5e8">HouseView</span><span style="color:#ffffff;font-weight:normal;-webkit-text-stroke:0.8px #ffffff">(</span><span style="color:#7dcfb9;font-weight:normal;-webkit-text-stroke:0.8px #7dcfb9">providedHouse</span><span style="color:#ffffff;font-weight:normal;-webkit-text-stroke:0.8px #ffffff">: currentHouse)</span></div>
<div class="t" style="left:560px;width:94px;text-align:right;top:887.75px;font-size:35px;color:#767676;-webkit-text-stroke:0.9px #767676;transform:scaleX(0.9);transform-origin:100% 0"><span>15</span></div>
<div class="t" style="left:711px;top:890.38px;font-family:'Liberation Mono', monospace;font-size:37px"><span style="color:#ffffff;font-weight:normal;-webkit-text-stroke:0.8px #ffffff">            }</span></div>
<div class="t" style="left:560px;width:94px;text-align:right;top:935.75px;font-size:35px;color:#767676;-webkit-text-stroke:0.9px #767676;transform:scaleX(0.9);transform-origin:100% 0"><span>16</span></div>
<div class="t" style="left:711px;top:938.38px;font-family:'Liberation Mono', monospace;font-size:37px"><span style="color:#ffffff;font-weight:normal;-webkit-text-stroke:0.8px #ffffff">            .</span><span style="color:#b07df0;font-weight:normal;-webkit-text-stroke:0.8px #b07df0">navigationTitle</span><span style="color:#ffffff;font-weight:normal;-webkit-text-stroke:0.8px #ffffff">(</span><span style="color:#ef6f6c;font-weight:normal;-webkit-text-stroke:0.8px #ef6f6c">&quot;LCS Houses&quot;</span><span style="color:#ffffff;font-weight:normal;-webkit-text-stroke:0.8px #ffffff">)</span></div>
<div class="t" style="left:560px;width:94px;text-align:right;top:983.75px;font-size:35px;color:#767676;-webkit-text-stroke:0.9px #767676;transform:scaleX(0.9);transform-origin:100% 0"><span>17</span></div>
<div class="t" style="left:711px;top:986.38px;font-family:'Liberation Mono', monospace;font-size:37px"><span style="color:#ffffff;font-weight:normal;-webkit-text-stroke:0.8px #ffffff">        }</span></div>
<div class="t" style="left:560px;width:94px;text-align:right;top:1031.75px;font-size:35px;color:#767676;-webkit-text-stroke:0.9px #767676;transform:scaleX(0.9);transform-origin:100% 0"><span>18</span></div>
<div class="t" style="left:711px;top:1034.38px;font-family:'Liberation Mono', monospace;font-size:37px"><span style="color:#ffffff;font-weight:normal;-webkit-text-stroke:0.8px #ffffff">    }</span></div>
<div class="t" style="left:560px;width:94px;text-align:right;top:1079.75px;font-size:35px;color:#767676;-webkit-text-stroke:0.9px #767676;transform:scaleX(0.9);transform-origin:100% 0"><span>19</span></div>
<div class="t" style="left:711px;top:1082.38px;font-family:'Liberation Mono', monospace;font-size:37px"><span style="color:#ffffff;font-weight:normal;-webkit-text-stroke:0.8px #ffffff">}</span></div>
<div class="t" style="left:560px;width:94px;text-align:right;top:1127.75px;font-size:35px;color:#767676;-webkit-text-stroke:0.9px #767676;transform:scaleX(0.9);transform-origin:100% 0"><span>20</span></div>
<div class="t" style="left:560px;width:94px;text-align:right;top:1175.75px;font-size:35px;color:#767676;-webkit-text-stroke:0.9px #767676;transform:scaleX(0.9);transform-origin:100% 0"><span>21</span></div>
<div class="t" style="left:711px;top:1178.38px;font-family:'Liberation Mono', monospace;font-size:37px"><span style="color:#b07df0;font-weight:normal;-webkit-text-stroke:0.8px #b07df0">#Preview</span><span style="color:#ffffff;font-weight:normal;-webkit-text-stroke:0.8px #ffffff"> {</span></div>
<div class="t" style="left:560px;width:94px;text-align:right;top:1223.75px;font-size:35px;color:#767676;-webkit-text-stroke:0.9px #767676;transform:scaleX(0.9);transform-origin:100% 0"><span>22</span></div>
<div class="t" style="left:711px;top:1226.38px;font-family:'Liberation Mono', monospace;font-size:37px"><span style="color:#ffffff;font-weight:normal;-webkit-text-stroke:0.8px #ffffff">    </span><span style="color:#c0f5e8;font-weight:normal;-webkit-text-stroke:0.8px #c0f5e8">HousesListView</span><span style="color:#ffffff;font-weight:normal;-webkit-text-stroke:0.8px #ffffff">()</span></div>
<div class="t" style="left:560px;width:94px;text-align:right;top:1271.75px;font-size:35px;color:#767676;-webkit-text-stroke:0.9px #767676;transform:scaleX(0.9);transform-origin:100% 0"><span>23</span></div>
<div class="t" style="left:711px;top:1274.38px;font-family:'Liberation Mono', monospace;font-size:37px"><span style="color:#ffffff;font-weight:normal;-webkit-text-stroke:0.8px #ffffff">}</span></div>
<div class="t" style="left:560px;width:94px;text-align:right;top:1319.75px;font-size:35px;color:#767676;-webkit-text-stroke:0.9px #767676;transform:scaleX(0.9);transform-origin:100% 0"><span>24</span></div>
<div class="a" style="left:2114px;top:190px;width:910px;height:1642px;background:#585c64;overflow:hidden">
<div class="a" style="left:24px;top:24px;width:62px;height:52px;border-radius:13px;background:#393939;box-shadow:0 0 0 1px rgba(0,0,0,0.25),0 1px 3px rgba(0,0,0,0.3)"></div>
<div class="a" style="left:107px;top:24px;width:235px;height:52px;border-radius:13px;background:#6a7fa7;box-shadow:0 0 0 1px rgba(0,0,0,0.2),0 1px 3px rgba(0,0,0,0.3)"></div>
<svg style="left:44px;top:35px" width="22" height="32" viewBox="0 0 22 32"><path d="M4 1.5 H17 M6.5 1.5 L7.5 10 Q2 13 1.5 17 H19.5 Q19 13 13.5 10 L14.5 1.5 M10.5 17 V30" fill="none" stroke="#e8e8e8" stroke-width="2" stroke-linejoin="round" stroke-linecap="round"/></svg>
<svg style="left:124px;top:36px" width="24" height="26" viewBox="0 0 24 26"><path d="M5 2 H19 M3 5 H21" stroke="#f0f0f0" stroke-width="1.6"/><rect x="1" y="8" width="22" height="17" rx="4" fill="none" stroke="#f0f0f0" stroke-width="2"/></svg>
<div class="t" style="left:160px;top:51.95px;font-size:23px;color:#ffffff;font-weight:normal"><span>HousesListView</span></div>
<div class="a" style="left:123px;top:381px;width:8px;height:48px;background:#2e2e2e;border-radius:2px"></div>
<div class="a" style="left:123px;top:473px;width:8px;height:90px;background:#2e2e2e;border-radius:2px"></div>
<div class="a" style="left:123px;top:590px;width:8px;height:90px;background:#2e2e2e;border-radius:2px"></div>
<div class="a" style="left:778px;top:534px;width:8px;height:146px;background:#2e2e2e;border-radius:2px"></div>
<div class="a" style="left:130px;top:143px;width:650px;height:1357px;border-radius:126px;background:#2f2f2f;box-shadow:inset 0 0 0 1.5px #6a6a6a"></div>
<div class="a" style="left:139px;top:152px;width:631px;height:1339px;border-radius:118px;background:#000"></div>
<div class="a" style="left:154px;top:166px;width:602px;height:1311px;border-radius:104px;background:#f2f2f7;overflow:hidden">
<div class="a" style="left:208px;top:21px;width:187px;height:55px;border-radius:28px;background:#000"></div>
<div class="t" style="left:23px;top:187.32px;font-size:50.5px;color:#000;font-weight:bold;letter-spacing:-1px"><span>LCS Houses</span></div>
<div class="a" style="left:30px;top:229px;width:543px;height:1200px;border-radius:20px;background:#fff"></div>
<div class="t" style="left:59px;top:276.67px;font-size:47.5px;color:#000;font-weight:normal;"><span>Ross</span></div>
<div class="t" style="left:61px;top:324.54px;font-size:25.3px;color:#000;font-weight:normal;"><span>Opened in October 2022, Ross House is</span></div>
<div class="t" style="left:61px;top:357.44px;font-size:25.3px;color:#000;font-weight:normal;"><span>named in honor of the Ross Family for</span></div>
<div class="t" style="left:61px;top:390.34px;font-size:25.3px;color:#000;font-weight:normal;"><span>their significant contributions to LCS. This</span></div>
<div class="t" style="left:61px;top:423.24px;font-size:25.3px;color:#000;font-weight:normal;"><span>house is part of a modern double</span></div>
<div class="t" style="left:61px;top:456.14px;font-size:25.3px;color:#000;font-weight:normal;"><span>residence designed to foster a sense of</span></div>
<div class="t" style="left:61px;top:489.04px;font-size:25.3px;color:#000;font-weight:normal;"><span>community on campus.</span></div>
<div class="a" style="left:60px;top:520px;width:513px;height:1px;background:#d6d6da"></div>
<div class="t" style="left:59px;top:568.48px;font-size:47.5px;color:#000;font-weight:normal;"><span>Parent</span></div>
<div class="t" style="left:61px;top:616.35px;font-size:25.3px;color:#000;font-weight:normal;"><span>Also inaugurated in 2022, Parent House</span></div>
<div class="t" style="left:61px;top:649.25px;font-size:25.3px;color:#000;font-weight:normal;"><span>recognizes the Parent Family&#x27;s leadership</span></div>
<div class="t" style="left:61px;top:682.14px;font-size:25.3px;color:#000;font-weight:normal;"><span>and philanthropy. It was named in</span></div>
<div class="t" style="left:61px;top:715.05px;font-size:25.3px;color:#000;font-weight:normal;"><span>gratitude for their transformative support</span></div>
<div class="t" style="left:61px;top:747.94px;font-size:25.3px;color:#000;font-weight:normal;"><span>of the school community.</span></div>
<div class="a" style="left:60px;top:779px;width:513px;height:1px;background:#d6d6da"></div>
<div class="t" style="left:59px;top:827.97px;font-size:47.5px;color:#000;font-weight:normal;"><span>Ryder</span></div>
<div class="t" style="left:61px;top:875.84px;font-size:25.3px;color:#000;font-weight:normal;"><span>Named after Tom Ryder, an alumnus of</span></div>
<div class="t" style="left:61px;top:908.74px;font-size:25.3px;color:#000;font-weight:normal;"><span>LCS (&#x27;53), Ryder House emphasizes the</span></div>
<div class="t" style="left:61px;top:941.64px;font-size:25.3px;color:#000;font-weight:normal;"><span>importance of tradition and community</span></div>
<div class="t" style="left:61px;top:974.54px;font-size:25.3px;color:#000;font-weight:normal;"><span>among its residents.</span></div>
<div class="a" style="left:60px;top:1006px;width:513px;height:1px;background:#d6d6da"></div>
<div class="t" style="left:59px;top:1054.38px;font-size:47.5px;color:#000;font-weight:normal;letter-spacing:1.1px"><span>Ondaatje</span></div>
<div class="t" style="left:61px;top:1102.24px;font-size:25.3px;color:#000;font-weight:normal;"><span>Named after Sri Lankan-Canadian author</span></div>
<div class="t" style="left:61px;top:1135.14px;font-size:25.3px;color:#000;font-weight:normal;"><span>Michael Ondaatje, this house symbolizes</span></div>
<div class="t" style="left:61px;top:1168.04px;font-size:25.3px;color:#000;font-weight:normal;"><span>the diverse and creative spirit nurtured</span></div>
<div class="t" style="left:61px;top:1200.94px;font-size:25.3px;color:#000;font-weight:normal;"><span>within the school.</span></div>
<div class="a" style="left:60px;top:1232px;width:513px;height:1px;background:#d6d6da"></div>
<div class="t" style="left:59px;top:1280.78px;font-size:47.5px;color:#000;font-weight:normal;letter-spacing:1.5px"><span>Moodie</span></div>
</div>
<div class="a" style="left:25px;top:1566px;width:161px;height:51px;border-radius:14px;background:#383838;box-shadow:0 0 0 1px rgba(255,255,255,0.07),0 1px 3px rgba(0,0,0,0.3)"></div>
<div class="a" style="left:207px;top:1566px;width:62px;height:51px;border-radius:14px;background:#383838;box-shadow:0 0 0 1px rgba(255,255,255,0.07),0 1px 3px rgba(0,0,0,0.3)"></div>
<div class="a" style="left:291px;top:1566px;width:53px;height:51px;border-radius:14px;background:#383838;box-shadow:0 0 0 1px rgba(255,255,255,0.07),0 1px 3px rgba(0,0,0,0.3)"></div>
<div class="a" style="left:679px;top:1566px;width:206px;height:51px;border-radius:14px;background:#383838;box-shadow:0 0 0 1px rgba(255,255,255,0.07),0 1px 3px rgba(0,0,0,0.3)"></div>
<svg style="left:42px;top:1579px" width="26" height="26" viewBox="0 0 26 26"><circle cx="13" cy="13" r="13" fill="#3478f6"/><path d="M10 8 L18 13 L10 18Z" fill="#1e2a40"/></svg>
<svg style="left:90px;top:1580px" width="24" height="24" viewBox="0 0 24 24"><rect x="1" y="1" width="22" height="22" rx="2.5" fill="none" stroke="#e6e6e6" stroke-width="2"/><path d="M8 6 L8 17 L10.5 14.5 L13 19 L15 18 L12.5 13.5 L16 13.5Z" fill="#e6e6e6"/></svg>
<svg style="left:143px;top:1582px" width="24" height="21" viewBox="0 0 24 21"><g fill="none" stroke="#e6e6e6" stroke-width="1.8"><rect x="1" y="1" width="5" height="7.5" rx="1.5"/><rect x="9.5" y="1" width="5" height="7.5" rx="1.5"/><rect x="18" y="1" width="5" height="7.5" rx="1.5"/><rect x="1" y="12" width="5" height="7.5" rx="1.5"/><rect x="9.5" y="12" width="5" height="7.5" rx="1.5"/><rect x="18" y="12" width="5" height="7.5" rx="1.5"/></g></svg>
<svg style="left:225px;top:1580px" width="26" height="25" viewBox="0 0 26 25"><rect x="1" y="1" width="24" height="10" rx="5" fill="none" stroke="#e6e6e6" stroke-width="2"/><circle cx="6" cy="6" r="3" fill="#e6e6e6"/><rect x="0" y="14" width="26" height="11" rx="5.5" fill="#e6e6e6"/><circle cx="20" cy="19.5" r="3.3" fill="#383838"/></svg>
<svg style="left:309px;top:1581px" width="16" height="24" viewBox="0 0 16 24"><rect x="1" y="1" width="14" height="22" rx="3" fill="none" stroke="#e6e6e6" stroke-width="2"/><path d="M6 4 H10 M6 20 H10" stroke="#e6e6e6" stroke-width="1.3"/></svg>
<svg style="left:696px;top:1577px" width="26" height="26" viewBox="0 0 26 26"><circle cx="11" cy="11" r="9" fill="none" stroke="#e6e6e6" stroke-width="2.4"/><path d="M17.5 17.5 L24 24" stroke="#e6e6e6" stroke-width="3" stroke-linecap="round"/><path d="M7 11 H15" stroke="#e6e6e6" stroke-width="2"/></svg>
<svg style="left:744px;top:1577px" width="26" height="26" viewBox="0 0 26 26"><circle cx="11" cy="11" r="9" fill="none" stroke="#e6e6e6" stroke-width="2.4"/><path d="M17.5 17.5 L24 24" stroke="#e6e6e6" stroke-width="3" stroke-linecap="round"/><path d="M9 8.5 L11.5 6.5 V15.5" fill="none" stroke="#e6e6e6" stroke-width="1.8"/></svg>
<svg style="left:792px;top:1577px" width="26" height="26" viewBox="0 0 26 26"><circle cx="11" cy="11" r="9" fill="none" stroke="#e6e6e6" stroke-width="2.4"/><path d="M17.5 17.5 L24 24" stroke="#e6e6e6" stroke-width="3" stroke-linecap="round"/><rect x="7.5" y="7.5" width="7" height="7" rx="1" fill="none" stroke="#e6e6e6" stroke-width="2"/></svg>
<svg style="left:840px;top:1577px" width="26" height="26" viewBox="0 0 26 26"><circle cx="11" cy="11" r="9" fill="none" stroke="#e6e6e6" stroke-width="2.4"/><path d="M17.5 17.5 L24 24" stroke="#e6e6e6" stroke-width="3" stroke-linecap="round"/><path d="M7 11 H15 M11 7 V15" stroke="#e6e6e6" stroke-width="2"/></svg>
</div>
<div class="a" style="left:0;top:0;width:3024px;height:1888px;border-radius:16px;box-shadow:inset 0 1.5px 0 #696969;pointer-events:none"></div>
</div></body></html>
